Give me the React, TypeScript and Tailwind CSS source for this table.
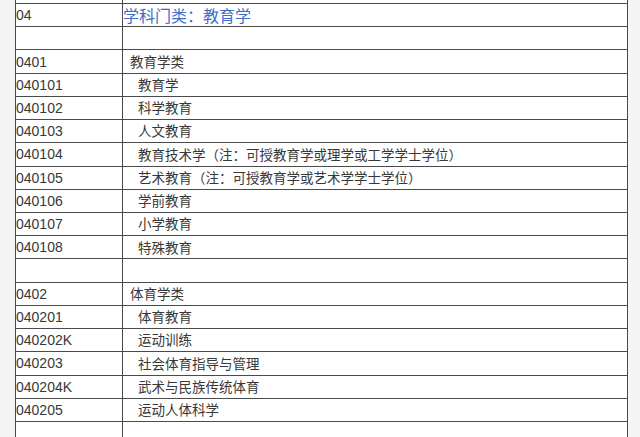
import React from 'react';

type Row = { code?: string; name?: string; level?: 'head' | 'cat' | 'sub' };

const rows: Row[] = [
  { code: '04', name: '学科门类：教育学', level: 'head' },
  {},
  { code: '0401', name: '教育学类', level: 'cat' },
  { code: '040101', name: '教育学', level: 'sub' },
  { code: '040102', name: '科学教育', level: 'sub' },
  { code: '040103', name: '人文教育', level: 'sub' },
  { code: '040104', name: '教育技术学（注：可授教育学或理学或工学学士学位）', level: 'sub' },
  { code: '040105', name: '艺术教育（注：可授教育学或艺术学学士学位）', level: 'sub' },
  { code: '040106', name: '学前教育', level: 'sub' },
  { code: '040107', name: '小学教育', level: 'sub' },
  { code: '040108', name: '特殊教育', level: 'sub' },
  {},
  { code: '0402', name: '体育学类', level: 'cat' },
  { code: '040201', name: '体育教育', level: 'sub' },
  { code: '040202K', name: '运动训练', level: 'sub' },
  { code: '040203', name: '社会体育指导与管理', level: 'sub' },
  { code: '040204K', name: '武术与民族传统体育', level: 'sub' },
  { code: '040205', name: '运动人体科学', level: 'sub' },
  {},
];

const nameClass = (level?: Row['level']) => {
  if (level === 'head') return 'text-[16px] text-[#3d6dc8] pl-0';
  if (level === 'cat') return 'text-[13.5px] text-[#383838] pl-[7px]';
  return 'text-[13.5px] text-[#383838] pl-[15px]';
};

export default function App() {
  return (
    <div className="h-screen w-full overflow-hidden bg-[#f4f4f4] font-['Noto_Sans_CJK_SC',sans-serif]">
      <div className="ml-[15px] w-[613px] h-full bg-white border-l border-r border-[#4a4a4a]">
        {/* tail of the row above */}
        <div className="flex h-[3px]">
          <div className="w-[107px] border-r border-[#4a4a4a]" />
          <div className="flex-1" />
        </div>
        {rows.map((r, i) => (
          <div key={i} className="flex h-[23.22px] border-t border-[#4a4a4a]">
            <div className="w-[107px] shrink-0 border-r border-[#4a4a4a] flex items-center font-['Liberation_Sans','Noto_Sans_CJK_SC',sans-serif] text-[14px] text-[#383838] leading-none">
              {r.code}
            </div>
            <div className={`flex-1 flex items-center leading-none whitespace-nowrap ${nameClass(r.level)}`}>
              {r.name}
            </div>
          </div>
        ))}
      </div>
    </div>
  );
}
